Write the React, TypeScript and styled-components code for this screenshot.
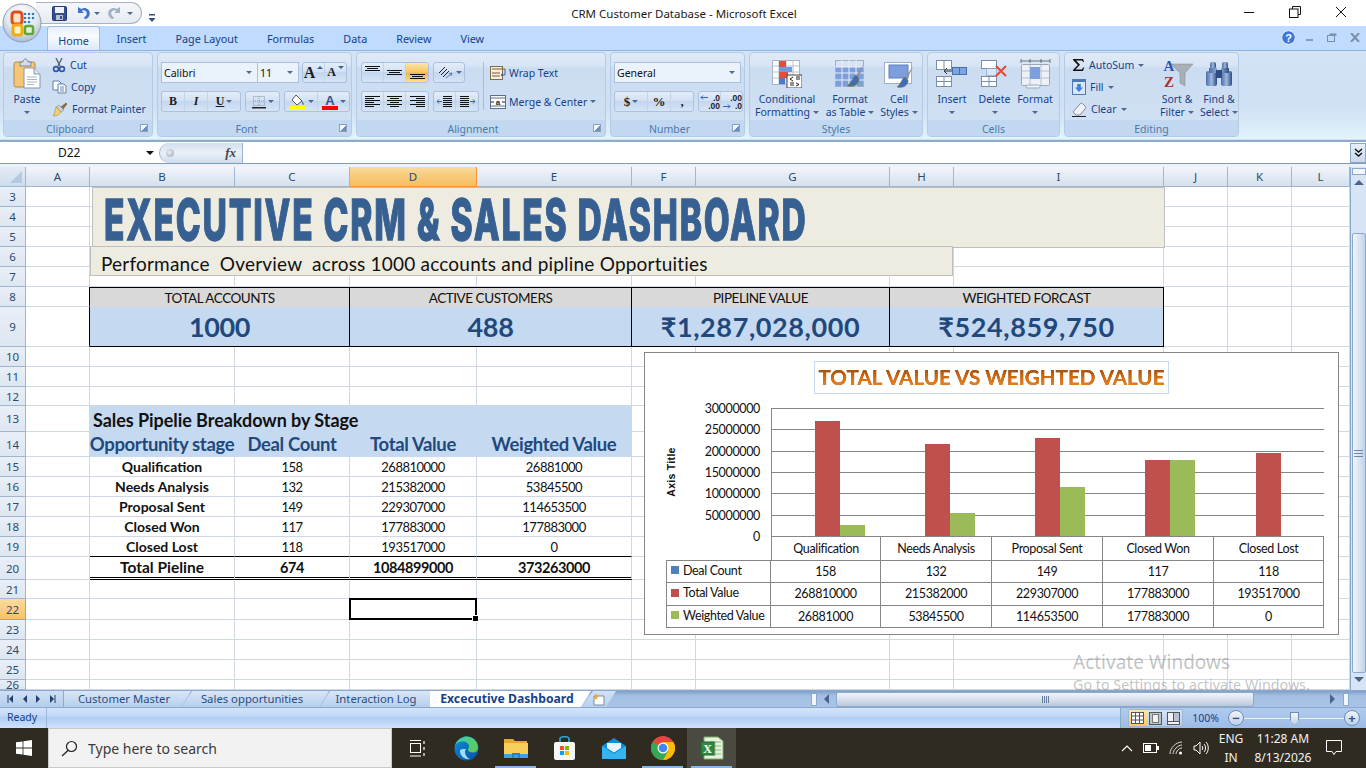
import React from 'react';
import styled, { createGlobalStyle } from 'styled-components';

const UI_FONT = '"Noto Sans", "Open Sans", sans-serif';
const SHEET_FONT = 'Lato, "Noto Sans", sans-serif';
const GRID_LINE = '#d0d7e5';

const GlobalStyle = createGlobalStyle`
  html, body { margin: 0; padding: 0; background: #fff; }
  * { box-sizing: border-box; }
`;

const Page = styled.div`
  position: relative;
  width: 1366px;
  height: 768px;
  overflow: hidden;
  display: flex;
  flex-direction: column;
  font-family: ${UI_FONT};
`;

/* ---------- title bar ---------- */

const TitleBar = styled.div`
  height: 26px;
  flex: none;
  background: #fff;
  display: flex;
  align-items: center;
  justify-content: center;
  padding-left: 2px;
  font-size: 11.5px;
  color: #1a1a1a;
`;

const WindowControls = styled.div`
  position: absolute;
  top: 6px;
  right: 19px;
  display: flex;
  gap: 34px;
  align-items: center;
`;

const Orb = styled.div`
  position: absolute;
  left: 2px;
  top: 3px;
  width: 40px;
  height: 40px;
  z-index: 3;
`;

const QuickAccess = styled.div`
  position: absolute;
  left: 36px;
  top: 2px;
  width: 106px;
  height: 22px;
  border: 1px solid #a7b2c2;
  border-left: none;
  border-radius: 0 12px 12px 0;
  background: linear-gradient(#f5f7fa, #e6ebf2);
  display: flex;
  align-items: center;
  gap: 8px;
  padding-left: 16px;
  z-index: 2;
`;

const QatPair = styled.div`
  display: flex;
  align-items: center;
  gap: 4px;
`;

const QatMenu = styled.div`
  position: absolute;
  left: 148px;
  top: 7px;
`;

/* ---------- ribbon tabs ---------- */

const TabRow = styled.div`
  height: 24px;
  flex: none;
  background: #bfdbff;
  display: flex;
  align-items: flex-end;
  padding-left: 47px;
  position: relative;
`;

const RibbonTab = styled.div<{ $active?: boolean }>`
  height: 24px;
  padding: 2px 14.5px 0;
  font-size: 10.8px;
  line-height: 21px;
  color: #15428b;
  ${(p) => p.$active && `
    width: 53px;
    padding: 3px 0 0;
    margin-right: 2px;
    text-align: center;
    background: linear-gradient(#e6f0fb, #f8fbff 40%, #dce9f8);
    border: 1px solid #9ebfdb;
    border-bottom: none;
    border-radius: 3px 3px 0 0;
  `}
`;

const HelpControls = styled.div`
  position: absolute;
  right: 6px;
  top: 4px;
  display: flex;
  align-items: center;
  gap: 13px;
`;

const HelpButton = styled.div`
  display: flex;
  margin-right: -4px;
`;

/* ---------- ribbon ---------- */

const Ribbon = styled.div`
  height: 92px;
  flex: none;
  padding: 1px 3px 0;
  display: flex;
  gap: 4px;
  background: linear-gradient(#d4e3f6 0, #cfe0f4 60%, #dcecf9 85%, #e4f4fc 97%, #8fabcc 98%, #8fabcc 100%);
  border-top: 1px solid #8db2e3;
`;

const GroupBox = styled.div<{ $width: number }>`
  width: ${(p) => p.$width}px;
  height: 85px;
  flex: none;
  display: flex;
  flex-direction: column;
  border: 1px solid #b4cbe6;
  border-radius: 4px;
  overflow: hidden;
  background: linear-gradient(#dfe9f7 0, #d8e5f6 15%, #cbdcf1 18%, #d2e1f4 100%);
`;

const GroupBody = styled.div`
  flex: 1;
  display: flex;
  align-items: flex-start;
  padding-top: 1px;
  min-height: 0;
`;

const GroupLabel = styled.div<{ $launcher?: boolean }>`
  height: 16px;
  flex: none;
  position: relative;
  padding-right: ${(p) => (p.$launcher ? 16 : 0)}px;
  background: #c2d8f0;
  color: #4e78ab;
  font-size: 10.5px;
  line-height: 18px;
  text-align: center;
`;

const Launcher = styled.span`
  position: absolute;
  right: 4px;
  top: 4px;
  width: 8px;
  height: 8px;
  border: 1px solid #86a0c4;
  background: linear-gradient(135deg, #f3f7fc 55%, #6f8db5 55%);
`;

const Caret = styled.span<{ $dark?: boolean }>`
  display: inline-block;
  width: 0;
  height: 0;
  flex: none;
  border-left: ${(p) => (p.$dark ? 4 : 3)}px solid transparent;
  border-right: ${(p) => (p.$dark ? 4 : 3)}px solid transparent;
  border-top: ${(p) => (p.$dark ? '4px solid #111' : '3px solid #4a6a94')};
`;

const TinyArrow = styled.span<{ $up?: boolean }>`
  display: inline-block;
  width: 0;
  height: 0;
  flex: none;
  align-self: flex-start;
  margin-top: 3px;
  border-left: 3px solid transparent;
  border-right: 3px solid transparent;
  ${(p) => (p.$up ? 'border-bottom: 3px solid #3f5f8f;' : 'border-top: 3px solid #3f5f8f;')}
`;

const LargeButton = styled.div<{ $width: number }>`
  width: ${(p) => p.$width}px;
  flex: none;
  display: flex;
  flex-direction: column;
  align-items: center;
  font-size: 10.5px;
  line-height: 13px;
  color: #15428b;
  white-space: nowrap;
  text-align: center;
`;

const LargeIcon = styled.div`
  height: 35px;
  margin-top: 2px;
  display: flex;
  align-items: center;
  justify-content: center;
`;

const LargeLabel = styled.div`
  margin-top: 2px;
  display: flex;
  flex-direction: column;
  align-items: center;
`;

const LabelLine = styled.span`
  display: flex;
  align-items: center;
  gap: 3px;
  height: 13px;
`;

const SmallStack = styled.div<{ $left: number; $width: number }>`
  width: ${(p) => p.$width}px;
  margin-left: ${(p) => p.$left}px;
  flex: none;
  display: flex;
  flex-direction: column;
`;

const SmallButton = styled.div`
  height: 22px;
  display: flex;
  align-items: center;
  gap: 4px;
  font-size: 10.5px;
  color: #15428b;
  white-space: nowrap;
`;

const WrapRow = styled(SmallButton)`
  height: 21px;
  margin-top: 8px;
  gap: 3px;
`;

const MergeRow = styled(SmallButton)`
  height: 21px;
  margin-top: 8px;
  gap: 3px;
`;

const ControlRows = styled.div<{ $left: number }>`
  margin: 8px 0 0 ${(p) => p.$left}px;
  flex: none;
  display: flex;
  flex-direction: column;
  gap: 8px;
`;

const ControlRow = styled.div`
  height: 21px;
  display: flex;
  gap: 4px;
`;

const FontCombos = styled.div`
  display: flex;
  margin-right: -1px;
  & > * + * { margin-left: -1px; }
`;

const ComboBox = styled.div<{ $width: number }>`
  width: ${(p) => p.$width}px;
  height: 21px;
  border: 1px solid #abc1de;
  background: #eaf2fb;
  display: flex;
  align-items: center;
  justify-content: space-between;
  padding: 0 5px 0 2px;
  font-size: 10.5px;
  color: #111;
`;

const ButtonSet = styled.div`
  height: 21px;
  display: flex;
  border: 1px solid #abc1de;
  border-radius: 3px;
  background: linear-gradient(#e4edf9, #d3e1f3 45%, #c4d7ef 50%, #d6e4f5);
  overflow: hidden;
`;

const SetItem = styled.div<{ $width: number; $on?: boolean; $size?: number }>`
  width: ${(p) => p.$width}px;
  height: 100%;
  display: flex;
  align-items: center;
  justify-content: center;
  gap: 2px;
  border-right: 1px solid #c3d4e9;
  color: #1c1c1c;
  font-family: "Liberation Serif", serif;
  font-size: ${(p) => p.$size ?? 12}px;
  font-weight: 700;
  &:last-child { border-right: none; }
  ${(p) => p.$on && 'background: linear-gradient(#fde6a8, #fbc868 45%, #f9b24a 55%, #fde08f);'}
`;

const Separator = styled.div`
  width: 1px;
  height: 48px;
  margin: 8px 0 0 4px;
  background: #a6bcd8;
  flex: none;
`;

/* ---------- formula bar ---------- */

const FormulaBar = styled.div`
  height: 25px;
  flex: none;
  background: #fff;
  display: flex;
  align-items: flex-start;
  border-bottom: 3px solid #eef1f5;
`;

const FormulaInner = styled.div`
  width: 100%;
  height: 21px;
  margin-top: 1px;
  display: flex;
  border-bottom: 1px solid #7f9db9;
`;

const NameBox = styled.div`
  width: 159px;
  flex: none;
  font-size: 12px;
  line-height: 20px;
  color: #111;
  padding: 0 5px 0 58px;
  display: flex;
  align-items: center;
  justify-content: space-between;
`;

const FxPill = styled.div`
  width: 84px;
  flex: none;
  border-radius: 12px 0 0 12px;
  border: 1px solid #9db2cc;
  border-top: none;
  border-bottom: none;
  background: linear-gradient(#d3dfee, #e9f0f8 50%, #cfdcec);
  display: flex;
  align-items: center;
  justify-content: space-between;
  padding: 0 6px;
`;

const FxDot = styled.span`
  width: 8px;
  height: 8px;
  border-radius: 50%;
  background: radial-gradient(circle at 40% 40%, #eef1f5, #9aa5b3);
`;

const FxText = styled.span`
  font-family: "Liberation Serif", serif;
  font-style: italic;
  font-weight: 700;
  font-size: 13px;
  color: #444;
`;

const FormulaInput = styled.div`
  flex: 1;
`;

const ExpandButton = styled.div`
  width: 16px;
  flex: none;
  background: linear-gradient(#e8eff8, #c9d9ec);
  border: 1px solid #8ca6c6;
  display: flex;
  align-items: center;
  justify-content: center;
`;

/* ---------- sheet ---------- */

const SheetArea = styled.div`
  height: 523px;
  flex: none;
  display: flex;
  position: relative;
`;

const SheetGrid = styled.div`
  position: relative;
  width: 1350px;
  height: 523px;
  overflow: hidden;
  display: grid;
  grid-template-columns: 26px 64px 145px 115px 127px 155px 64px 194px 64px 210px 64px 64px 58px;
  grid-template-rows: 20px 20px 20px 20px 20px 20px 20px 40px 20px 20px 19px 26px 25px 20px 20px 20px 20px 20px 23px 19px 21px 20px 20px 20px 10px;
  font-family: ${SHEET_FONT};
`;

const CornerCell = styled.div`
  background: linear-gradient(#e3ebf6, #cfdcec);
  border-right: 1px solid #9eb6ce;
  border-bottom: 1px solid #9eb6ce;
  position: relative;
  &::after {
    content: '';
    position: absolute;
    right: 3px;
    bottom: 3px;
    border-left: 12px solid transparent;
    border-bottom: 12px solid #b4c9e2;
  }
`;

const ColumnHead = styled.div<{ $on?: boolean }>`
  display: flex;
  align-items: center;
  justify-content: center;
  font-family: ${UI_FONT};
  font-size: 11.5px;
  color: #2c4a6e;
  border-right: 1px solid ${(p) => (p.$on ? '#f29536' : '#9eb6ce')};
  border-bottom: 1px solid ${(p) => (p.$on ? '#f29536' : '#9eb6ce')};
  background: ${(p) => (p.$on
    ? 'linear-gradient(#f9dc9f, #f8cb7c 45%, #f6bd63)'
    : 'linear-gradient(#f3f6fb, #e4ebf5 45%, #d6e1ee)')};
`;

const RowHead = styled.div<{ $on?: boolean }>`
  display: flex;
  align-items: center;
  justify-content: center;
  font-family: ${UI_FONT};
  font-size: 11.5px;
  color: #2c4a6e;
  border-right: 1px solid ${(p) => (p.$on ? '#f29536' : '#9eb6ce')};
  border-bottom: 1px solid ${(p) => (p.$on ? '#f29536' : '#9eb6ce')};
  background: ${(p) => (p.$on ? 'linear-gradient(#f9dc9f, #f6c167)' : 'linear-gradient(#e9eff7, #dde6f1)')};
`;

const Cell = styled.div<{ $edge?: string; $under?: string }>`
  min-width: 0;
  border-right: 1px solid ${(p) => p.$edge ?? GRID_LINE};
  border-bottom: 1px solid ${(p) => p.$under ?? GRID_LINE};
  display: flex;
  align-items: center;
  justify-content: center;
  white-space: nowrap;
  font-size: 13px;
  letter-spacing: -0.5px;
  color: #111;
`;

const KpiLabel = styled(Cell)`
  grid-column: span 2;
  background: #d9d9d9;
  border-top: 1px solid #000;
  border-right: 1px solid #000;
  border-bottom: none;
  font-size: 13.5px;
  letter-spacing: -0.45px;
`;

const KpiValue = styled(Cell)<{ $wide?: boolean }>`
  grid-column: span 2;
  background: #c5d9f1;
  border-right: 1px solid #000;
  border-bottom: 1px solid #000;
  font-size: 27px;
  font-weight: 700;
  letter-spacing: ${(p) => (p.$wide ? '0.6px' : '-0.4px')};
  color: #1f497d;
  padding-bottom: 1px;
`;

const BandTitle = styled(Cell)`
  grid-column: span 4;
  justify-content: flex-start;
  padding: 2px 0 0 3px;
  background: #c5d9f1;
  border-color: #c5d9f1;
  font-size: 18px;
  font-weight: 700;
  letter-spacing: -0.05px;
`;

const BandHead = styled(Cell)`
  background: #c5d9f1;
  border-color: #c5d9f1;
  font-size: 18.5px;
  font-weight: 700;
  letter-spacing: -0.35px;
  color: #1f497d;
`;

const StageCell = styled(Cell)`
  font-weight: 700;
  font-size: 14px;
  letter-spacing: 0;
`;

const TotalCell = styled(Cell)`
  font-weight: 700;
  font-size: 14.5px;
  letter-spacing: -0.4px;
  border-bottom: 3px double #000;
`;

const TotalName = styled(TotalCell)`
  font-size: 15.5px;
  letter-spacing: 0;
`;

const ActiveCell = styled(Cell)`
  position: relative;
  &::before {
    content: '';
    position: absolute;
    inset: -1px;
    border: 2px solid #000;
  }
  &::after {
    content: '';
    position: absolute;
    right: -3px;
    bottom: -3px;
    width: 5px;
    height: 5px;
    background: #000;
    border: 1px solid #fff;
  }
`;

const TitleBanner = styled.div`
  position: absolute;
  left: 92px;
  top: 20px;
  width: 1073px;
  height: 61px;
  background: #eeece1;
  border: 1px solid #bfbfbf;
  padding: 4px 0 0 11px;
  display: flex;
  align-items: center;
`;

const BannerText = styled.span`
  font-family: Inter, "Liberation Sans", sans-serif;
  font-weight: 800;
  font-size: 57px;
  line-height: 57px;
  letter-spacing: 3px;
  color: #376092;
  -webkit-text-stroke: 1.3px #376092;
  white-space: nowrap;
  transform-origin: left center;
  transform: scaleX(0.589);
`;

const SubBanner = styled.div`
  position: absolute;
  left: 90px;
  top: 79px;
  width: 863px;
  height: 30px;
  background: #eeece1;
  border: 1px solid #bfbfbf;
  padding-left: 10px;
  font-family: ${SHEET_FONT};
  font-size: 19px;
  letter-spacing: 0.2px;
  line-height: 34px;
  color: #111;
  white-space: pre;
`;

/* ---------- chart ---------- */

const ChartFrame = styled.div`
  position: absolute;
  left: 644px;
  top: 185px;
  width: 695px;
  height: 283px;
  background: #fff;
  border: 1px solid #868686;
  display: flex;
  flex-direction: column;
`;

const ChartTitle = styled.div`
  width: 355px;
  height: 33px;
  margin: 8px 0 0 169px;
  border: 1px solid #c5d9f1;
  display: flex;
  justify-content: center;
`;

const ChartTitleText = styled.span`
  font-family: ${SHEET_FONT};
  font-weight: 700;
  font-size: 20.6px;
  line-height: 31px;
  white-space: nowrap;
  background: linear-gradient(#a94f08 25%, #e0700c 55%, #ea8420 80%);
  -webkit-background-clip: text;
  background-clip: text;
  color: transparent;
  filter: drop-shadow(0.6px 0.6px 0.4px rgba(100, 55, 12, 0.9));
`;

const ChartPlot = styled.svg`
  display: block;
  margin-top: 6px;
  flex: none;
  overflow: visible;
`;

const DataTable = styled.div`
  margin-left: 21px;
  width: 658px;
  display: grid;
  grid-template-columns: 105px 110px 111px 111px 111px 110px;
  grid-template-rows: 24px 22px 23px 22px;
  font-family: ${SHEET_FONT};
  font-size: 12.5px;
  letter-spacing: -0.35px;
  color: #111;
`;

const TableBlank = styled.div`
  border-bottom: 1px solid #868686;
`;

const TableCell = styled.div`
  display: flex;
  align-items: center;
  justify-content: center;
  padding-bottom: 1px;
  white-space: nowrap;
  border-right: 1px solid #868686;
  border-bottom: 1px solid #868686;
`;

const FirstDataCell = styled(TableCell)`
  border-left: 1px solid #868686;
`;

const LegendCell = styled(TableCell)`
  justify-content: flex-start;
  padding: 0 0 3px 4px;
  gap: 4px;
  border-left: 1px solid #868686;
`;

const LegendKey = styled.span<{ $color: string }>`
  width: 8px;
  height: 8px;
  flex: none;
  background: ${(p) => p.$color};
`;

const Watermark = styled.div`
  position: absolute;
  left: 1073px;
  top: 483px;
  font-family: "Noto Sans", sans-serif;
  color: rgba(110, 110, 110, 0.42);
  pointer-events: none;
  white-space: nowrap;
`;

const WatermarkTitle = styled.div`
  font-size: 19px;
  line-height: 24px;
`;

const WatermarkHint = styled.div`
  font-size: 14.3px;
  line-height: 20px;
  margin-top: 1px;
`;

/* ---------- scrollbars ---------- */

const VScroll = styled.div`
  width: 16px;
  height: 523px;
  flex: none;
  background: #d6e4f5;
  border-left: 1px solid #8ba9cc;
  display: flex;
  flex-direction: column;
  align-items: center;
`;

const ScrollSplit = styled.div`
  width: 14px;
  height: 7px;
  margin-top: 1px;
  background: #f3f7fc;
  border: 1px solid #8ba9cc;
  flex: none;
`;

const ScrollArrowBox = styled.div`
  height: 14px;
  display: flex;
  align-items: center;
  justify-content: center;
  flex: none;
`;

const VThumb = styled.div`
  width: 14px;
  height: 440px;
  margin-top: 44px;
  flex: none;
  border: 1px solid #8ba9cc;
  border-radius: 2px;
  background: linear-gradient(90deg, #f2f6fb, #dae5f2 50%, #c1d2e7);
  display: flex;
  align-items: center;
  justify-content: center;
`;

const VGrip = styled.div`
  width: 9px;
  height: 7px;
  border-top: 1px solid #6d88aa;
  border-bottom: 1px solid #6d88aa;
  position: relative;
  &::after {
    content: '';
    position: absolute;
    left: 0;
    right: 0;
    top: 2px;
    height: 1px;
    background: #6d88aa;
  }
`;

const DownArrow = styled.div`
  margin-top: 3px;
  width: 14px;
  display: flex;
  justify-content: center;
`;

/* ---------- sheet tabs ---------- */

const SheetTabs = styled.div`
  height: 17px;
  flex: none;
  display: flex;
  align-items: stretch;
  background: linear-gradient(#7f9fc9, #a3bfe3 30%, #a9c4e6);
  border-top: 1px solid #8ba9cc;
`;

const TabNav = styled.div`
  width: 64px;
  flex: none;
  display: flex;
  align-items: center;
  justify-content: space-around;
  padding: 0 3px;
  background: linear-gradient(#cfe0f5, #b4cdec);
  border-right: 1px solid #8ba9cc;
`;

const SheetTab = styled.div<{ $width: number; $active?: boolean; $first?: boolean }>`
  width: ${(p) => p.$width}px;
  flex: none;
  display: flex;
  align-items: center;
  justify-content: center;
  font-size: 11.3px;
  color: #2a4d7f;
  white-space: nowrap;
  background: linear-gradient(#d8e6f7, #b6cfed);
  clip-path: polygon(${(p) => (p.$first || p.$active ? '0' : '10px')} 0, calc(100% - 1px) 0, calc(100% - 11px) 100%, 0 100%);
  margin-right: -10px;
  padding: 0 8px 2px 0;
  ${(p) => p.$active && `
    background: #fff;
    font-weight: 700;
    color: #15428b;
    font-size: 12.2px;
  `}
`;

const NewSheetTab = styled.div`
  width: 34px;
  flex: none;
  display: flex;
  align-items: center;
  justify-content: center;
  background: linear-gradient(#d2e2f6, #b8d0ed);
  clip-path: polygon(11px 0, 100% 0, calc(100% - 10px) 100%, 0 100%);
`;

const HScrollRow = styled.div`
  margin-left: 195px;
  width: 538px;
  display: flex;
  align-items: center;
  flex: none;
`;

const HSplit = styled.div`
  width: 6px;
  height: 13px;
  background: #f3f7fc;
  border: 1px solid #8ba9cc;
  flex: none;
`;

const HArrowBox = styled.div`
  width: 19px;
  flex: none;
  display: flex;
  justify-content: center;
`;

const HTrackEnd = styled.div`
  flex: 1;
  display: flex;
  justify-content: flex-end;
  padding-right: 7px;
`;

const HThumb = styled.div`
  width: 418px;
  height: 15px;
  flex: none;
  border: 1px solid #8ba9cc;
  border-radius: 2px;
  background: linear-gradient(#f0f4f9, #dbe3ee 45%, #b9c8da);
  display: flex;
  align-items: center;
  justify-content: center;
`;

const HGrip = styled.div`
  width: 7px;
  height: 7px;
  background: repeating-linear-gradient(90deg, #667f9f 0 1px, transparent 1px 2px);
`;

/* ---------- status bar ---------- */

const StatusBar = styled.div`
  height: 21px;
  flex: none;
  display: flex;
  background: linear-gradient(#d3e4fa, #c4daf7 35%, #b1cdf2 50%, #cfe2fb);
  border-top: 1px solid #8ba9cc;
`;

const ReadyCell = styled.div`
  width: 47px;
  flex: none;
  padding-left: 7px;
  font-size: 10.5px;
  line-height: 18px;
  color: #15428b;
  border-right: 1px solid #9ab7da;
`;

const StatusGap = styled.div`
  flex: 1;
`;

const StatusRight = styled.div`
  width: 246px;
  flex: none;
  display: flex;
  align-items: center;
  padding: 0 6px 0 7px;
  background: linear-gradient(#b1cbee, #9dbce6);
  border-left: 1px solid #8ba9cc;
`;

const ViewButtons = styled.div`
  width: 55px;
  height: 18px;
  flex: none;
  display: flex;
  border: 1px solid #9db6d4;
  border-radius: 2px;
  background: linear-gradient(#d6e4f5, #b8cee9);
`;

const ViewButton = styled.div<{ $on?: boolean }>`
  flex: 1;
  display: flex;
  align-items: center;
  justify-content: center;
  ${(p) => p.$on && 'background: linear-gradient(#fde6a8, #fbc868);'}
`;

const ZoomText = styled.span`
  width: 45px;
  flex: none;
  text-align: center;
  font-size: 10.5px;
  color: #15428b;
`;

const ZoomCircle = styled.div`
  width: 16px;
  height: 16px;
  flex: none;
  border-radius: 50%;
  border: 1px solid #6f8db5;
  background: linear-gradient(#f2f6fc, #bcd0ea);
  display: flex;
  align-items: center;
  justify-content: center;
  font-size: 13px;
  font-weight: 700;
  line-height: 12px;
  color: #33527d;
`;

const ZoomTrack = styled.div`
  flex: 1;
  height: 1px;
  background: #e9f1fb;
  position: relative;
`;

const ZoomKnob = styled.div`
  position: absolute;
  left: 46px;
  top: -6px;
  width: 9px;
  height: 13px;
  background: linear-gradient(#f4f7fb, #c2d2e6);
  border: 1px solid #6f8db5;
  clip-path: polygon(0 0, 100% 0, 100% 65%, 50% 100%, 0 65%);
`;

/* ---------- taskbar ---------- */

const Taskbar = styled.div`
  height: 40px;
  flex: none;
  display: flex;
  align-items: stretch;
  background: #2f2b21;
  color: #fff;
`;

const StartButton = styled.div`
  width: 48px;
  flex: none;
  display: flex;
  align-items: center;
  justify-content: center;
`;

const SearchBox = styled.div`
  width: 344px;
  flex: none;
  background: #f2f2f2;
  border: 1px solid #c8c8c8;
  display: flex;
  align-items: center;
  gap: 10px;
  padding-left: 12px;
  font-size: 14px;
  color: #3a3a3a;
`;

const TaskIcons = styled.div`
  display: flex;
  flex: none;
  margin-left: 1px;
`;

const TaskIcon = styled.div<{ $running?: boolean; $active?: boolean }>`
  width: 49px;
  display: flex;
  align-items: center;
  justify-content: center;
  position: relative;
  ${(p) => p.$active && 'background: #4b4a40;'}
  ${(p) => p.$running && `
    &::after {
      content: '';
      position: absolute;
      left: 4px;
      right: 4px;
      bottom: 0;
      height: 2px;
      background: #7fb8ec;
    }
  `}
`;

const Tray = styled.div`
  margin-left: auto;
  padding-right: 16px;
  display: flex;
  align-items: center;
  flex: none;
`;

const TrayIcons = styled.div`
  display: flex;
  align-items: center;
  gap: 10px;
  margin-right: 4px;
`;

const TrayText = styled.div<{ $width: number }>`
  width: ${(p) => p.$width}px;
  margin-right: 4px;
  text-align: center;
  font-size: 12px;
  line-height: 19px;
  color: #f2f2f2;
`;

const Notify = styled.div`
  width: 33px;
  display: flex;
  justify-content: center;
`;

const SortSvg = styled.svg`
  overflow: visible;
`;

/* ---------- icons ---------- */

const OrbIcon = () => (
  <svg width="40" height="40" viewBox="0 0 40 40">
    <defs>
      <radialGradient id="orbFill" cx="50%" cy="30%" r="75%">
        <stop offset="0" stopColor="#ffffff" />
        <stop offset="0.55" stopColor="#e2e8ef" />
        <stop offset="1" stopColor="#9db3cc" />
      </radialGradient>
    </defs>
    <circle cx="20" cy="20" r="19" fill="url(#orbFill)" stroke="#8d9cb0" />
    <rect x="10" y="9" width="10" height="12" rx="3" fill="#fbe3c8" stroke="#df4f1c" strokeWidth="3" />
    <rect x="11" y="22" width="9" height="10" rx="2.5" fill="#fdf2c9" stroke="#f1ac14" strokeWidth="3" />
    <rect x="23" y="23" width="8" height="8" rx="2" fill="#e3f2d6" stroke="#5ea838" strokeWidth="2.5" />
    <g fill="#2a7fc9">
      <circle cx="23" cy="11" r="1.3" /><circle cx="27" cy="11" r="1.3" /><circle cx="31" cy="11" r="1.3" />
      <circle cx="23" cy="15" r="1.3" /><circle cx="27" cy="15" r="1.3" /><circle cx="31" cy="15" r="1.3" />
      <circle cx="23" cy="19" r="1.3" /><circle cx="27" cy="19" r="1.3" />
    </g>
  </svg>
);

const SaveIcon = () => (
  <svg width="15" height="15" viewBox="0 0 15 15">
    <rect x="0.5" y="0.5" width="14" height="14" rx="1" fill="#35508f" stroke="#233a75" />
    <rect x="3" y="1" width="9" height="6" fill="#eef2f9" />
    <rect x="4" y="9" width="7" height="5" fill="#b9c2d2" />
    <rect x="8" y="10" width="2" height="3" fill="#35508f" />
  </svg>
);

const UndoIcon = ({ color }: { color: string }) => (
  <svg width="15" height="14" viewBox="0 0 15 14">
    <path d="M3 1v6h6L6.6 4.8c2.6-1.4 5.2.2 5.2 2.7 0 1.8-1.2 3.2-3 3.7l1.4 2c3-.8 4.6-3.2 4.6-5.7 0-4.2-5-7-8.4-4.4z" fill={color} />
  </svg>
);

const RedoIcon = ({ color }: { color: string }) => (
  <svg width="15" height="14" viewBox="0 0 15 14">
    <path d="M12 1v6H6l2.4-2.2C5.8 3.4 3.2 5 3.2 7.5c0 1.8 1.2 3.2 3 3.7l-1.4 2C1.8 12.4.2 10 .2 7.5.2 3.3 5.2.5 8.6 3.1z" fill={color} />
  </svg>
);

const QatDropIcon = () => (
  <svg width="8" height="10" viewBox="0 0 8 10">
    <rect x="1" y="0" width="6" height="1.5" fill="#2d4f80" />
    <path d="M0.5 4h7L4 8z" fill="#2d4f80" />
  </svg>
);

const LineBox = ({ lines, top }: { lines: [number, number][]; top: number }) => (
  <svg width="17" height="15" viewBox="0 0 17 15">
    {lines.map(([x, w], i) => (
      <rect key={i} x={x} y={top + i * 2} width={w} height="1" fill="#111" />
    ))}
  </svg>
);

const PasteIcon = () => (
  <svg width="28" height="32" viewBox="0 0 28 32">
    <rect x="1" y="4" width="21" height="25" rx="2" fill="#f5c677" stroke="#b98a3f" />
    <path d="M7 4h3c0-4 5-4 5 0h3v4H7z" fill="#d7dde6" stroke="#7f8894" />
    <path d="M11 10h10l6 6v14H11z" fill="#fff" stroke="#8a97a8" />
    <path d="M21 10v6h6" fill="#dfe6ef" stroke="#8a97a8" />
    <path d="M14 19h10M14 21.5h10M14 24h10M14 26.5h7" stroke="#aab5c4" />
  </svg>
);

const ScissorsIcon = () => (
  <svg width="14" height="15" viewBox="0 0 14 15">
    <path d="M4 0l4 8M10 0L6 8" stroke="#5a6472" strokeWidth="1.4" />
    <circle cx="4" cy="11" r="2.4" fill="none" stroke="#2f55a5" strokeWidth="1.6" />
    <circle cx="10" cy="11" r="2.4" fill="none" stroke="#2f55a5" strokeWidth="1.6" />
  </svg>
);

const CopyIcon = () => (
  <svg width="15" height="14" viewBox="0 0 15 14">
    <path d="M1 1h6l2 2v7H1z" fill="#fff" stroke="#5c7fb0" />
    <path d="M6 4h6l2 2v7H6z" fill="#fff" stroke="#5c7fb0" />
    <path d="M8 7h4M8 9h4M8 11h4" stroke="#6c87ad" />
  </svg>
);

const PainterIcon = () => (
  <svg width="16" height="15" viewBox="0 0 16 15">
    <path d="M9 5l2 2 4-5-1-1z" fill="#9a6a3c" stroke="#5d3f22" strokeWidth="0.5" />
    <path d="M7 3l5 5-3 2-5-5z" fill="#c7ced8" stroke="#747f8d" strokeWidth="0.5" />
    <path d="M4 5l5 5c-2 3-5 4-8 4 2-2 2-6 3-9z" fill="#f3d36b" stroke="#a88a30" strokeWidth="0.6" />
  </svg>
);

const BorderIcon = () => (
  <svg width="14" height="14" viewBox="0 0 14 14">
    <rect x="1.5" y="1.5" width="11" height="9" fill="none" stroke="#8a98aa" strokeDasharray="1 1" />
    <path d="M7 1v10M1 6h12" stroke="#8a98aa" strokeDasharray="1 1" />
    <rect x="0" y="12" width="14" height="1.5" fill="#222" />
  </svg>
);

const FillIcon = () => (
  <svg width="17" height="16" viewBox="0 0 17 16">
    <path d="M7 1l6 6-5 4-5-5z" fill="#fff" stroke="#555" />
    <path d="M13 7c2 2 2 3 1.5 4-.8 0-1.7-1-1.5-4z" fill="#4a6fa5" />
    <rect x="1" y="12" width="15" height="4" fill="#ffff00" />
  </svg>
);

const FontColorIcon = () => (
  <svg width="16" height="16" viewBox="0 0 16 16">
    <text x="8" y="11" textAnchor="middle" fontFamily="Liberation Sans" fontWeight="700" fontSize="13" fill="#2f4f8f">A</text>
    <rect x="0" y="12" width="16" height="4" fill="#ff0000" />
  </svg>
);

const OrientationIcon = () => (
  <svg width="17" height="15" viewBox="0 0 17 15">
    <path d="M2 8l6-6M4 10l6-6M6 12l6-6" stroke="#222" />
    <path d="M9 13l6-5m0 0l-3 .5m3-.5l-1 3" stroke="#5a7fb0" fill="none" />
  </svg>
);

const IndentIcon = ({ flip }: { flip?: boolean }) => (
  <svg width="15" height="14" viewBox="0 0 15 14">
    <g transform={flip ? 'matrix(-1 0 0 1 15 0)' : undefined}>
      <path d="M6 1.5h9M6 3.5h9M6 5.5h9M6 7.5h9M6 9.5h9M6 11.5h9" stroke="#111" />
      <path d="M5 6.5H0m0 0l2-2m-2 2l2 2" stroke="#2f67c0" fill="none" />
    </g>
  </svg>
);

const WrapIcon = () => (
  <svg width="16" height="14" viewBox="0 0 16 14">
    <rect x="0.5" y="0.5" width="12" height="13" fill="#f3efe2" stroke="#7b6d4c" />
    <path d="M2 3h13M2 7h8M2 10h8" stroke="#8a5b2a" />
    <path d="M15 3v6h-4m0 0l2-2m-2 2l2 2" stroke="#44638e" fill="none" />
  </svg>
);

const MergeIcon = () => (
  <svg width="16" height="14" viewBox="0 0 16 14">
    <rect x="0.5" y="0.5" width="15" height="13" fill="#fff" stroke="#5c6f88" />
    <path d="M0 3h16M0 11h16" stroke="#5c6f88" />
    <text x="8" y="10" textAnchor="middle" fontFamily="Liberation Sans" fontSize="8" fontWeight="700" fill="#222">a</text>
    <path d="M1 7h3M15 7h-3" stroke="#222" />
  </svg>
);

const DecIcon = ({ up }: { up: boolean }) => (
  <svg width="20" height="16" viewBox="0 0 20 16">
    <text x="20" y="7" textAnchor="end" fontFamily="Liberation Sans" fontWeight="700" fontSize="8.5" fill="#222">{up ? '.0' : '.00'}</text>
    <text x="20" y="15" textAnchor="end" fontFamily="Liberation Sans" fontWeight="700" fontSize="8.5" fill="#222">{up ? '.00' : '.0'}</text>
    <path d={up ? 'M8 3.5H1m0 0l2-2m-2 2l2 2' : 'M1 12.5h7m0 0l-2-2m2 2l-2 2'} stroke="#2f67c0" fill="none" />
  </svg>
);

const ConditionalIcon = () => (
  <svg width="30" height="28" viewBox="0 0 30 28">
    <rect x="0.5" y="0.5" width="27" height="24" fill="#fff" stroke="#a8b3c2" />
    <path d="M7 0v25M14 0v25M21 0v25M0 6h28M0 12h28M0 18h28" stroke="#b6c0cd" />
    <rect x="7" y="1" width="7" height="6" fill="#e84e37" />
    <rect x="7" y="7" width="13" height="5" fill="#6f9be0" />
    <rect x="7" y="12" width="9" height="6" fill="#e84e37" />
    <rect x="7" y="18" width="6" height="6" fill="#4a7bcf" />
    <rect x="15" y="15" width="15" height="13" fill="#fff" stroke="#444" />
    <path d="M21 17l-3 2 3 2M24 17h4M24 19h4M18 23h4M18 25h4M24 23l3 1.5-3 1.5" stroke="#222" fill="none" />
  </svg>
);

const TableBrushIcon = () => (
  <svg width="30" height="28" viewBox="0 0 30 28">
    <rect x="0.5" y="0.5" width="28" height="26" fill="#7e9fdd" stroke="#9fb0c6" />
    <rect x="1" y="1" width="27" height="6" fill="#d8e2f2" />
    <path d="M7 0v27M14 0v27M21 0v27M0 7h29M0 13h29M0 20h29" stroke="#e9eff8" />
    <path d="M29 4l-8 12 2 2z" fill="#8b9099" />
    <path d="M21 15c-3 1-3 6-9 11 7 2 13-2 12-8z" fill="#3e6db8" stroke="#9d8544" strokeWidth="0.6" />
  </svg>
);

const CellStyleIcon = () => (
  <svg width="30" height="28" viewBox="0 0 30 28">
    <rect x="0.5" y="2.5" width="27" height="21" fill="#fff" stroke="#9fb0c6" />
    <rect x="5" y="5" width="19" height="13" fill="#7e9fdd" stroke="#5d7fbd" />
    <path d="M29 6l-8 12 2 2z" fill="#8b9099" />
    <path d="M21 17c-3 1-3 5-8 10 6 2 12-2 11-7z" fill="#3e6db8" stroke="#9d8544" strokeWidth="0.6" />
  </svg>
);

const InsertCellsIcon = () => (
  <svg width="32" height="28" viewBox="0 0 32 28">
    <rect x="0.5" y="0.5" width="15" height="9" fill="#fff" stroke="#7b8ea8" />
    <path d="M8 0v10" stroke="#7b8ea8" />
    <rect x="0.5" y="16.5" width="15" height="10" fill="#fff" stroke="#7b8ea8" />
    <path d="M8 16v11M0 21.5h16" stroke="#7b8ea8" />
    <rect x="16.5" y="7.5" width="14" height="7" fill="#7ea3df" stroke="#4a6fa8" />
    <path d="M23.5 8v6" stroke="#4a6fa8" />
    <path d="M16 11H8m0 0l3-3m-3 3l3 3" stroke="#333" fill="none" />
  </svg>
);

const DeleteCellsIcon = () => (
  <svg width="28" height="28" viewBox="0 0 28 28">
    <rect x="0.5" y="0.5" width="15" height="8" fill="#fff" stroke="#7b8ea8" />
    <rect x="0.5" y="16.5" width="15" height="10" fill="#fff" stroke="#7b8ea8" />
    <path d="M8 16v11M0 21.5h16" stroke="#7b8ea8" />
    <rect x="5.5" y="8.5" width="10" height="7" fill="#dbe5f5" stroke="#6d8cc0" strokeDasharray="1 1" />
    <path d="M15 6l10 10M25 6L15 16" stroke="#e8472c" strokeWidth="2" />
  </svg>
);

const FormatCellsIcon = () => (
  <svg width="31" height="30" viewBox="0 0 31 30">
    <path d="M1 2h29M1 0v4M30 0v4M10 0v4M21 0v4" stroke="#444" strokeWidth="0.7" />
    <rect x="1.5" y="5.5" width="28" height="21" rx="1" fill="#eef2f8" stroke="#9ba8ba" />
    <path d="M10 6v20M21 6v20M2 12h27M2 19h27" stroke="#b5c0cf" />
    <rect x="10" y="8" width="10" height="12" fill="#7e9fdd" />
    <rect x="6" y="26" width="14" height="3" rx="1.5" fill="#eef2f8" stroke="#9ba8ba" />
  </svg>
);

const SigmaIcon = () => (
  <svg width="13" height="12" viewBox="0 0 13 12">
    <path d="M1 0h10l1 3h-1l-1-1.6H4l4 4.4-4.6 4.6H10l1.2-1.9h1L11 12H1v-1l4.8-5L1 1z" fill="#111" />
  </svg>
);

const FillDownIcon = () => (
  <svg width="14" height="16" viewBox="0 0 14 16">
    <rect x="0.5" y="0.5" width="13" height="15" fill="#d9e6f7" stroke="#4f79b6" />
    <rect x="1" y="1" width="12" height="2" fill="#4f79b6" />
    <path d="M7 13L3 8.5h2.2V5h3.6v3.5H11z" fill="#3f7fd8" />
  </svg>
);

const EraserIcon = () => (
  <svg width="15" height="15" viewBox="0 0 15 15">
    <path d="M1 10l7-8c1-1 2-1 3 0l2 2c1 1 1 2 0 3l-5 6H4z" fill="#eef1f5" stroke="#7e8a99" />
    <path d="M0 14.5h14" stroke="#222" />
  </svg>
);

const SortIcon = () => (
  <SortSvg width="32" height="30" viewBox="0 0 32 30">
    <path d="M10 5h22l-8 9v13l-5-3V14z" fill="#a9afb8" stroke="#80868f" strokeWidth="0.5" />
    <text x="8" y="12" textAnchor="middle" fontFamily="Liberation Serif" fontWeight="700" fontSize="15" fill="#2b55b0">A</text>
    <text x="8" y="28" textAnchor="middle" fontFamily="Liberation Serif" fontWeight="700" fontSize="15" fill="#a3342a">Z</text>
  </SortSvg>
);

const BinocularsIcon = () => (
  <svg width="28" height="26" viewBox="0 0 28 26">
    <defs>
      <linearGradient id="binoFill" x1="0" x2="1" y1="0" y2="0">
        <stop offset="0" stopColor="#4a6da8" />
        <stop offset="0.5" stopColor="#9db7dd" />
        <stop offset="1" stopColor="#2d4c85" />
      </linearGradient>
    </defs>
    <rect x="5" y="1" width="6" height="7" rx="2" fill="url(#binoFill)" />
    <rect x="17" y="1" width="6" height="7" rx="2" fill="url(#binoFill)" />
    <rect x="1" y="10" width="11" height="15" rx="2" fill="url(#binoFill)" />
    <rect x="16" y="10" width="11" height="15" rx="2" fill="url(#binoFill)" />
    <path d="M4 7h8v5H4zM16 7h8v5h-8z" fill="url(#binoFill)" />
    <rect x="11" y="9" width="6" height="8" fill="#2d4c85" />
  </svg>
);

const HelpIcon = () => (
  <svg width="15" height="15" viewBox="0 0 15 15">
    <circle cx="7.5" cy="7.5" r="6.8" fill="#3e77d6" stroke="#e9f2fb" />
    <text x="7.5" y="11.5" textAnchor="middle" fontFamily="Liberation Sans" fontWeight="700" fontSize="11" fill="#fff">?</text>
  </svg>
);

const SmallWindowIcons = () => (
  <>
    <svg width="9" height="9" viewBox="0 0 9 9"><rect x="1" y="6" width="7" height="2" fill="#8a9cb3" /></svg>
    <svg width="10" height="9" viewBox="0 0 10 9">
      <rect x="0.5" y="2.5" width="7" height="6" fill="none" stroke="#7b8ea8" />
      <rect x="2.5" y="0.5" width="7" height="2" fill="#7b8ea8" />
    </svg>
    <svg width="10" height="9" viewBox="0 0 10 9"><path d="M1 0l8 9M9 0L1 9" stroke="#7b8ea8" strokeWidth="2" /></svg>
  </>
);

const MinimizeIcon = () => (
  <svg width="12" height="12" viewBox="0 0 12 12"><path d="M1 6.5h10" stroke="#111" /></svg>
);

const RestoreIcon = () => (
  <svg width="12" height="12" viewBox="0 0 12 12">
    <path d="M3.5 3V.5h8v8H9" fill="none" stroke="#111" />
    <rect x="0.5" y="3" width="8.5" height="8.5" fill="none" stroke="#111" />
  </svg>
);

const CloseIcon = () => (
  <svg width="12" height="12" viewBox="0 0 12 12"><path d="M1 1l10 10M11 1L1 11" stroke="#111" /></svg>
);

const ExpandIcon = () => (
  <svg width="9" height="10" viewBox="0 0 9 10">
    <path d="M1 1l3.5 3L8 1M1 5l3.5 3L8 5" fill="none" stroke="#111" strokeWidth="1.4" />
  </svg>
);

const ScrollTriangle = ({ dir, color = '#48648c' }: { dir: 'up' | 'down' | 'left' | 'right'; color?: string }) => {
  const points = { up: '0,6 5,1 10,6', down: '0,1 10,1 5,6', left: '6,0 6,10 1,5', right: '1,0 1,10 6,5' }[dir];
  const size = dir === 'up' || dir === 'down' ? { width: 10, height: 7 } : { width: 7, height: 10 };
  return (
    <svg {...size} viewBox={`0 0 ${size.width} ${size.height}`}><polygon points={points} fill={color} /></svg>
  );
};

const NavIcon = ({ flip, bar }: { flip?: boolean; bar?: boolean }) => (
  <svg width="7" height="9" viewBox="0 0 7 9">
    <g transform={flip ? 'matrix(-1 0 0 1 7 0)' : undefined}>
      <polygon points="1,0 1,8 5,4" fill="#21406e" />
      {bar && <rect x="5.5" y="0" width="1" height="8" fill="#21406e" />}
    </g>
  </svg>
);

const NewSheetIcon = () => (
  <svg width="16" height="13" viewBox="0 0 16 13">
    <path d="M3 3h10v9H3z" fill="#fff" stroke="#7b8ea8" />
    <path d="M4 0l1 2 2-1-1 2 2 1-2 .6.6 2L5 5.8 3.6 7l.4-2-2-.5 2-1z" fill="#f0a92c" />
  </svg>
);

const ViewNormalIcon = () => (
  <svg width="13" height="12" viewBox="0 0 13 12">
    <rect x="0.5" y="0.5" width="12" height="11" fill="#fff" stroke="#555" />
    <path d="M4.5 0v12M8.5 0v12M0 4h13M0 8h13" stroke="#555" />
  </svg>
);

const ViewLayoutIcon = () => (
  <svg width="13" height="13" viewBox="0 0 13 13">
    <rect x="0.5" y="0.5" width="12" height="12" fill="#b9c3cf" stroke="#555" />
    <rect x="3.5" y="2.5" width="6" height="8" fill="#eef1f5" stroke="#777" />
  </svg>
);

const ViewBreakIcon = () => (
  <svg width="13" height="13" viewBox="0 0 13 13">
    <rect x="0.5" y="0.5" width="12" height="12" fill="#eef1f5" stroke="#555" />
    <path d="M6.5 0v9M0 9.5h13" stroke="#555" />
    <rect x="7" y="1" width="5" height="8" fill="#b9c3cf" />
  </svg>
);

const WindowsLogo = () => (
  <svg width="16" height="16" viewBox="0 0 16 16">
    <path d="M0 2.3L6.6 1.4v6.2H0zM7.4 1.3L16 0v7.6H7.4zM0 8.4h6.6v6.2L0 13.7zM7.4 8.4H16V16l-8.6-1.3z" fill="#fff" />
  </svg>
);

const SearchIcon = () => (
  <svg width="17" height="17" viewBox="0 0 17 17">
    <circle cx="10.5" cy="6.5" r="5" fill="none" stroke="#222" strokeWidth="1.2" />
    <path d="M7 10.5L1 16" stroke="#222" strokeWidth="1.3" />
  </svg>
);

const TaskViewIcon = () => (
  <svg width="16" height="17" viewBox="0 0 16 17">
    <rect x="0.5" y="3.5" width="10" height="9" fill="none" stroke="#fff" />
    <path d="M0 0.5h11M0 16h11M14 1v3M14 7v3M14 13v3" stroke="#fff" strokeWidth="1.2" />
  </svg>
);

const EdgeIcon = () => (
  <svg width="25" height="25" viewBox="0 0 25 25">
    <defs>
      <linearGradient id="edgeBlue" x1="0" y1="0" x2="1" y2="1">
        <stop offset="0" stopColor="#0c8fd6" />
        <stop offset="1" stopColor="#0b4fa8" />
      </linearGradient>
      <linearGradient id="edgeGreen" x1="0" y1="0" x2="1" y2="1">
        <stop offset="0" stopColor="#3bd0b0" />
        <stop offset="1" stopColor="#63c94c" />
      </linearGradient>
    </defs>
    <circle cx="12.5" cy="12.5" r="12" fill="url(#edgeBlue)" />
    <path d="M1 10C3 3 9 .5 13 .5c6 0 11 5 11 11 0 3-2 5-5 5-3 0-5-1-5-3 0-1 1-1 1-3 0-3-3-5-6-5-4 0-7 2-8 4.5z" fill="url(#edgeGreen)" />
    <path d="M6 15c0 5 5 9 10 8-3-1-5-4-5-7 0-2 1-3 1-3-3 0-6 0-6 2z" fill="#9fdcf5" />
  </svg>
);

const FolderIcon = () => (
  <svg width="24" height="22" viewBox="0 0 24 22">
    <path d="M0 2h9l2 2h12v4H0z" fill="#e6a92b" />
    <rect x="0" y="6" width="24" height="15" fill="#f8cf5b" />
    <rect x="0" y="17" width="24" height="4" fill="#3f9fe0" />
    <path d="M8 21v-5h8v5h-2v-3h-4v3z" fill="#2f7fc4" />
  </svg>
);

const StoreIcon = () => (
  <svg width="23" height="25" viewBox="0 0 23 25">
    <path d="M7 6V3c0-3 9-3 9 0v3" fill="none" stroke="#2aa6d9" strokeWidth="1.6" />
    <rect x="1" y="6" width="21" height="18" rx="2" fill="#f6f6f6" />
    <rect x="7" y="10" width="4" height="4" fill="#f25022" />
    <rect x="12" y="10" width="4" height="4" fill="#7fba00" />
    <rect x="7" y="15" width="4" height="4" fill="#00a4ef" />
    <rect x="12" y="15" width="4" height="4" fill="#ffb900" />
  </svg>
);

const MailIcon = () => (
  <svg width="24" height="21" viewBox="0 0 24 21">
    <path d="M0 8l12-8 12 8v13H0z" fill="#0f8fdc" />
    <path d="M5 5h14v5l-7 4.5-7-4.5z" fill="#e6f5fd" />
    <path d="M0 8l12 8 12-8v13H0z" fill="#33b5f2" />
  </svg>
);

const ChromeIcon = () => (
  <svg width="24" height="24" viewBox="0 0 24 24">
    <circle cx="12" cy="12" r="12" fill="#e8453c" />
    <path d="M12 12L1.6 6A12 12 0 0 0 12 24l5-9z" fill="#34a853" />
    <path d="M12 12l5.2 3L12 24A12 12 0 0 0 22.4 6H12z" fill="#fbbc05" />
    <circle cx="12" cy="12" r="5.5" fill="#fff" />
    <circle cx="12" cy="12" r="4.3" fill="#4285f4" />
  </svg>
);

const ExcelIcon = () => (
  <svg width="24" height="24" viewBox="0 0 24 24">
    <path d="M4 1h14l5 4v18H4z" fill="#e6f1de" stroke="#7aa86c" />
    <path d="M10 6h11M10 10h11M10 14h11M10 18h11M15 5v15" stroke="#8cb87f" />
    <rect x="1" y="6" width="13" height="13" fill="#2e8b3e" stroke="#1d6a2b" />
    <text x="7.5" y="16.5" textAnchor="middle" fontFamily="Liberation Serif" fontWeight="700" fontSize="12" fill="#fff">X</text>
  </svg>
);

const BatteryIcon = () => (
  <svg width="16" height="10" viewBox="0 0 16 10">
    <rect x="0.5" y="0.5" width="13" height="9" fill="none" stroke="#fff" />
    <rect x="2" y="2" width="6" height="6" fill="#fff" />
    <rect x="14" y="3" width="2" height="4" fill="#fff" />
  </svg>
);

const WifiIcon = () => (
  <svg width="14" height="14" viewBox="0 0 14 14">
    <path d="M1 13C1 7 7 1 13 1M4 13c0-4 5-9 9-9M7 13c0-2.5 3-6 6-6" fill="none" stroke="#ddd" />
    <circle cx="11.5" cy="12" r="1.5" fill="#fff" />
  </svg>
);

const VolumeIcon = () => (
  <svg width="16" height="14" viewBox="0 0 16 14">
    <path d="M1 5h2l4-4v12l-4-4H1z" fill="none" stroke="#fff" />
    <path d="M9 5c1 1 1 3 0 4M11 3c2 2 2 6 0 8M13 1c3 3 3 9 0 12" fill="none" stroke="#fff" />
  </svg>
);

const CaretUpIcon = () => (
  <svg width="12" height="7" viewBox="0 0 12 7"><path d="M1 6l5-5 5 5" fill="none" stroke="#fff" strokeWidth="1.2" /></svg>
);

const NotifyIcon = () => (
  <svg width="16" height="16" viewBox="0 0 16 16">
    <path d="M0.5 0.5h15v11H10l-2 3-2-3H0.5z" fill="none" stroke="#fff" />
  </svg>
);

/* ---------- data ---------- */

const COLUMNS = ['A', 'B', 'C', 'D', 'E', 'F', 'G', 'H', 'I', 'J', 'K', 'L'];
const ROWS = Array.from({ length: 24 }, (_, i) => i + 3);

const STAGES = [
  { name: 'Qualification', count: 158, total: 268810000, weighted: 26881000 },
  { name: 'Needs Analysis', count: 132, total: 215382000, weighted: 53845500 },
  { name: 'Proposal Sent', count: 149, total: 229307000, weighted: 114653500 },
  { name: 'Closed Won', count: 117, total: 177883000, weighted: 177883000 },
  { name: 'Closed Lost', count: 118, total: 193517000, weighted: 0 },
];

const KPIS = [
  { label: 'TOTAL ACCOUNTS', value: '1000' },
  { label: 'ACTIVE CUSTOMERS', value: '488' },
  { label: 'PIPELINE VALUE', value: '₹1,287,028,000' },
  { label: 'WEIGHTED FORCAST', value: '₹524,859,750' },
];

const Y_LABELS = ['30000000', '25000000', '20000000', '15000000', '10000000', '50000000', '0'];

// bar heights in px as drawn in the 128px plot
const BARS = [
  { x: 170, red: 115, green: 11 },
  { x: 280, red: 92, green: 23 },
  { x: 390, red: 98, green: 49 },
  { x: 500, red: 76, green: 76 },
  { x: 611, red: 83, green: 0 },
];

const blanks = (from: number, to: number, row: number) =>
  COLUMNS.slice(from, to).map((c) => <Cell key={`${c}${row}`} />);

const renderCells = (row: number) => {
  if (row === 8) {
    return (
      <>
        <Cell $edge="#000" />
        {KPIS.map((k) => <KpiLabel key={k.label}>{k.label}</KpiLabel>)}
        {blanks(9, 12, row)}
      </>
    );
  }
  if (row === 9) {
    return (
      <>
        <Cell $edge="#000" />
        {KPIS.map((k) => <KpiValue key={k.label} $wide={k.value.length > 5}>{k.value}</KpiValue>)}
        {blanks(9, 12, row)}
      </>
    );
  }
  if (row === 13) {
    return (
      <>
        <Cell />
        <BandTitle>Sales Pipelie Breakdown by Stage</BandTitle>
        {blanks(5, 12, row)}
      </>
    );
  }
  if (row === 14) {
    return (
      <>
        <Cell />
        {['Opportunity stage', 'Deal Count', 'Total Value', 'Weighted Value'].map((h) => <BandHead key={h}>{h}</BandHead>)}
        {blanks(5, 12, row)}
      </>
    );
  }
  if (row >= 15 && row <= 19) {
    const s = STAGES[row - 15];
    const under = row === 19 ? '#000' : undefined;
    return (
      <>
        <Cell />
        <StageCell $under={under}>{s.name}</StageCell>
        <Cell $under={under}>{s.count}</Cell>
        <Cell $under={under}>{s.total}</Cell>
        <Cell $under={under}>{s.weighted}</Cell>
        {blanks(5, 12, row)}
      </>
    );
  }
  if (row === 20) {
    return (
      <>
        <Cell />
        <TotalName>Total Pieline</TotalName>
        {['674', '1084899000', '373263000'].map((t) => <TotalCell key={t}>{t}</TotalCell>)}
        {blanks(5, 12, row)}
      </>
    );
  }
  if (row === 22) {
    return (
      <>
        {blanks(0, 3, row)}
        <ActiveCell />
        {blanks(4, 12, row)}
      </>
    );
  }
  return blanks(0, 12, row);
};

const Chart = () => (
  <ChartFrame>
    <ChartTitle><ChartTitleText>TOTAL VALUE VS WEIGHTED VALUE</ChartTitleText></ChartTitle>
    <ChartPlot width="693" height="137" viewBox="0 0 693 137">
      <text
        transform="translate(30 72) rotate(-90)"
        textAnchor="middle"
        fontFamily="Liberation Sans"
        fontWeight="700"
        fontSize="10.5"
        letterSpacing="0.3"
        fill="#111"
      >
        Axis Title
      </text>
      {Y_LABELS.map((label, i) => (
        <g key={label}>
          <line x1="126" x2="679" y1={8.5 + Math.round(i * 21.33)} y2={8.5 + Math.round(i * 21.33)} stroke="#868686" />
          <text
            x="115"
            y={13 + i * 21.33}
            textAnchor="end"
            fontFamily="Lato"
            fontSize="12.5"
            letterSpacing="-0.35"
            fill="#111"
          >
            {label}
          </text>
        </g>
      ))}
      <line x1="126.5" x2="126.5" y1="8" y2="137" stroke="#868686" />
      {BARS.map((b) => (
        <g key={b.x}>
          <rect x={b.x} y={136 - b.red} width="25" height={b.red} fill="#c0504d" />
          {b.green > 0 && <rect x={b.x + 25} y={136 - b.green} width="25" height={b.green} fill="#9bbb59" />}
        </g>
      ))}
    </ChartPlot>
    <DataTable>
      <TableBlank />
      {STAGES.map((s, i) => (i === 0
        ? <FirstDataCell key={s.name}>{s.name}</FirstDataCell>
        : <TableCell key={s.name}>{s.name}</TableCell>))}
      <LegendCell><LegendKey $color="#4f81bd" />Deal Count</LegendCell>
      {STAGES.map((s) => <TableCell key={s.name}>{s.count}</TableCell>)}
      <LegendCell><LegendKey $color="#c0504d" />Total Value</LegendCell>
      {STAGES.map((s) => <TableCell key={s.name}>{s.total}</TableCell>)}
      <LegendCell><LegendKey $color="#9bbb59" />Weighted Value</LegendCell>
      {STAGES.map((s) => <TableCell key={s.name}>{s.weighted}</TableCell>)}
    </DataTable>
  </ChartFrame>
);

const LargeAction = ({ width, icon, lines, arrowInline }: {
  width: number;
  icon: React.ReactNode;
  lines: string[];
  arrowInline?: boolean;
}) => (
  <LargeButton $width={width}>
    <LargeIcon>{icon}</LargeIcon>
    <LargeLabel>
      {lines.map((line, i) => (
        <LabelLine key={line}>
          {line}
          {arrowInline && i === lines.length - 1 && <Caret />}
        </LabelLine>
      ))}
      {!arrowInline && <LabelLine><Caret /></LabelLine>}
    </LargeLabel>
  </LargeButton>
);

const RibbonGroup = ({ width, label, launcher, children }: {
  width: number;
  label: string;
  launcher?: boolean;
  children: React.ReactNode;
}) => (
  <GroupBox $width={width}>
    <GroupBody>{children}</GroupBody>
    <GroupLabel $launcher={launcher}>
      {label}
      {launcher && <Launcher />}
    </GroupLabel>
  </GroupBox>
);

const App = () => (
  <Page>
    <GlobalStyle />
    <Orb><OrbIcon /></Orb>
    <QuickAccess>
      <SaveIcon />
      <QatPair><UndoIcon color="#3f73c4" /><Caret /></QatPair>
      <QatPair><RedoIcon color="#9fb2c8" /><Caret /></QatPair>
    </QuickAccess>
    <QatMenu><QatDropIcon /></QatMenu>

    <TitleBar>CRM Customer Database - Microsoft Excel</TitleBar>
    <WindowControls>
      <MinimizeIcon />
      <RestoreIcon />
      <CloseIcon />
    </WindowControls>

    <TabRow>
      <RibbonTab $active>Home</RibbonTab>
      {['Insert', 'Page Layout', 'Formulas', 'Data', 'Review', 'View'].map((t) => <RibbonTab key={t}>{t}</RibbonTab>)}
      <HelpControls>
        <HelpButton><HelpIcon /></HelpButton>
        <SmallWindowIcons />
      </HelpControls>
    </TabRow>

    <Ribbon>
      <RibbonGroup width={150} label="Clipboard" launcher>
        <LargeAction width={46} icon={<PasteIcon />} lines={['Paste']} />
        <SmallStack $left={2} $width={100}>
          <SmallButton><ScissorsIcon />Cut</SmallButton>
          <SmallButton><CopyIcon />Copy</SmallButton>
          <SmallButton><PainterIcon />Format Painter</SmallButton>
        </SmallStack>
      </RibbonGroup>

      <RibbonGroup width={195} label="Font" launcher>
        <ControlRows $left={3}>
          <ControlRow>
            <FontCombos>
              <ComboBox $width={97}>Calibri<Caret /></ComboBox>
              <ComboBox $width={42}>11<Caret /></ComboBox>
            </FontCombos>
            <ButtonSet>
              <SetItem $width={22} $size={16}>A<TinyArrow $up /></SetItem>
              <SetItem $width={21} $size={12}>A<TinyArrow /></SetItem>
            </ButtonSet>
          </ControlRow>
          <ControlRow>
            <ButtonSet>
              <SetItem $width={23}>B</SetItem>
              <SetItem $width={23}><i>I</i></SetItem>
              <SetItem $width={32}><u>U</u><Caret /></SetItem>
            </ButtonSet>
            <ButtonSet>
              <SetItem $width={33}><BorderIcon /><Caret /></SetItem>
            </ButtonSet>
            <ButtonSet>
              <SetItem $width={33}><FillIcon /><Caret /></SetItem>
              <SetItem $width={31}><FontColorIcon /><Caret /></SetItem>
            </ButtonSet>
          </ControlRow>
        </ControlRows>
      </RibbonGroup>

      <RibbonGroup width={250} label="Alignment" launcher>
        <ControlRows $left={4}>
          <ControlRow>
            <ButtonSet>
              <SetItem $width={22}><LineBox top={1} lines={[[1, 15], [3, 11], [1, 15]]} /></SetItem>
              <SetItem $width={22}><LineBox top={5} lines={[[1, 15], [3, 11], [1, 15]]} /></SetItem>
              <SetItem $width={22} $on><LineBox top={9} lines={[[1, 15], [3, 11], [1, 15]]} /></SetItem>
            </ButtonSet>
            <ButtonSet>
              <SetItem $width={30}><OrientationIcon /><Caret /></SetItem>
            </ButtonSet>
          </ControlRow>
          <ControlRow>
            <ButtonSet>
              <SetItem $width={22}><LineBox top={2} lines={[[1, 15], [1, 9], [1, 15], [1, 9], [1, 15], [1, 9]]} /></SetItem>
              <SetItem $width={22}><LineBox top={2} lines={[[1, 15], [4, 9], [1, 15], [4, 9], [1, 15], [4, 9]]} /></SetItem>
              <SetItem $width={22}><LineBox top={2} lines={[[1, 15], [7, 9], [1, 15], [7, 9], [1, 15], [7, 9]]} /></SetItem>
            </ButtonSet>
            <ButtonSet>
              <SetItem $width={22}><IndentIcon /></SetItem>
              <SetItem $width={22}><IndentIcon flip /></SetItem>
            </ButtonSet>
          </ControlRow>
        </ControlRows>
        <Separator />
        <SmallStack $left={6} $width={112}>
          <WrapRow><WrapIcon />Wrap Text</WrapRow>
          <MergeRow><MergeIcon />Merge &amp; Center<Caret /></MergeRow>
        </SmallStack>
      </RibbonGroup>

      <RibbonGroup width={135} label="Number" launcher>
        <ControlRows $left={3}>
          <ControlRow>
            <ComboBox $width={127}>General<Caret /></ComboBox>
          </ControlRow>
          <ControlRow>
            <ButtonSet>
              <SetItem $width={33} $size={13}>$<Caret /></SetItem>
              <SetItem $width={23} $size={13}>%</SetItem>
              <SetItem $width={22} $size={13}>,</SetItem>
            </ButtonSet>
            <ButtonSet>
              <SetItem $width={22}><DecIcon up /></SetItem>
              <SetItem $width={21}><DecIcon up={false} /></SetItem>
            </ButtonSet>
          </ControlRow>
        </ControlRows>
      </RibbonGroup>

      <RibbonGroup width={174} label="Styles">
        <LargeAction width={74} icon={<ConditionalIcon />} lines={['Conditional', 'Formatting']} arrowInline />
        <LargeAction width={52} icon={<TableBrushIcon />} lines={['Format', 'as Table']} arrowInline />
        <LargeAction width={46} icon={<CellStyleIcon />} lines={['Cell', 'Styles']} arrowInline />
      </RibbonGroup>

      <RibbonGroup width={133} label="Cells">
        <LargeAction width={48} icon={<InsertCellsIcon />} lines={['Insert']} />
        <LargeAction width={37} icon={<DeleteCellsIcon />} lines={['Delete']} />
        <LargeAction width={44} icon={<FormatCellsIcon />} lines={['Format']} />
      </RibbonGroup>

      <RibbonGroup width={175} label="Editing">
        <SmallStack $left={7} $width={84}>
          <SmallButton><SigmaIcon />AutoSum<Caret /></SmallButton>
          <SmallButton><FillDownIcon />Fill<Caret /></SmallButton>
          <SmallButton><EraserIcon />Clear<Caret /></SmallButton>
        </SmallStack>
        <LargeAction width={42} icon={<SortIcon />} lines={['Sort &', 'Filter']} arrowInline />
        <LargeAction width={42} icon={<BinocularsIcon />} lines={['Find &', 'Select']} arrowInline />
      </RibbonGroup>
    </Ribbon>

    <FormulaBar>
      <FormulaInner>
        <NameBox>D22<Caret $dark /></NameBox>
        <FxPill>
          <FxDot />
          <FxText>fx</FxText>
        </FxPill>
        <FormulaInput />
        <ExpandButton><ExpandIcon /></ExpandButton>
      </FormulaInner>
    </FormulaBar>

    <SheetArea>
      <SheetGrid>
        <CornerCell />
        {COLUMNS.map((c) => <ColumnHead key={c} $on={c === 'D'}>{c}</ColumnHead>)}
        {ROWS.map((row) => (
          <React.Fragment key={row}>
            <RowHead $on={row === 22}>{row}</RowHead>
            {renderCells(row)}
          </React.Fragment>
        ))}
        <TitleBanner>
          <BannerText>EXECUTIVE CRM &amp; SALES DASHBOARD</BannerText>
        </TitleBanner>
        <SubBanner>{'Performance  Overview  across 1000 accounts and pipline Opportuities'}</SubBanner>
        <Chart />
        <Watermark>
          <WatermarkTitle>Activate Windows</WatermarkTitle>
          <WatermarkHint>Go to Settings to activate Windows.</WatermarkHint>
        </Watermark>
      </SheetGrid>
      <VScroll>
        <ScrollSplit />
        <ScrollArrowBox><ScrollTriangle dir="up" /></ScrollArrowBox>
        <VThumb><VGrip /></VThumb>
        <DownArrow><ScrollTriangle dir="down" /></DownArrow>
      </VScroll>
    </SheetArea>

    <SheetTabs>
      <TabNav>
        <NavIcon flip bar />
        <NavIcon flip />
        <NavIcon />
        <NavIcon bar />
      </TabNav>
      <SheetTab $width={128} $first>Customer Master</SheetTab>
      <SheetTab $width={148}>Sales opportunities</SheetTab>
      <SheetTab $width={120}>Interaction Log</SheetTab>
      <SheetTab $width={162} $active>Excecutive Dashboard</SheetTab>
      <NewSheetTab><NewSheetIcon /></NewSheetTab>
      <HScrollRow>
        <HSplit />
        <HArrowBox><ScrollTriangle dir="left" /></HArrowBox>
        <HThumb><HGrip /></HThumb>
        <HTrackEnd><ScrollTriangle dir="right" /></HTrackEnd>
        <HSplit />
      </HScrollRow>
    </SheetTabs>

    <StatusBar>
      <ReadyCell>Ready</ReadyCell>
      <StatusGap />
      <StatusRight>
        <ViewButtons>
          <ViewButton $on><ViewNormalIcon /></ViewButton>
          <ViewButton><ViewLayoutIcon /></ViewButton>
          <ViewButton><ViewBreakIcon /></ViewButton>
        </ViewButtons>
        <ZoomText>100%</ZoomText>
        <ZoomCircle>−</ZoomCircle>
        <ZoomTrack><ZoomKnob /></ZoomTrack>
        <ZoomCircle>+</ZoomCircle>
      </StatusRight>
    </StatusBar>

    <Taskbar>
      <StartButton><WindowsLogo /></StartButton>
      <SearchBox><SearchIcon />Type here to search</SearchBox>
      <TaskIcons>
        <TaskIcon><TaskViewIcon /></TaskIcon>
        <TaskIcon><EdgeIcon /></TaskIcon>
        <TaskIcon $running><FolderIcon /></TaskIcon>
        <TaskIcon><StoreIcon /></TaskIcon>
        <TaskIcon><MailIcon /></TaskIcon>
        <TaskIcon $running><ChromeIcon /></TaskIcon>
        <TaskIcon $running $active><ExcelIcon /></TaskIcon>
      </TaskIcons>
      <Tray>
        <TrayIcons>
          <CaretUpIcon />
          <BatteryIcon />
          <WifiIcon />
          <VolumeIcon />
        </TrayIcons>
        <TrayText $width={36}>ENG<br />IN</TrayText>
        <TrayText $width={60}>11:28 AM<br />8/13/2026</TrayText>
        <Notify><NotifyIcon /></Notify>
      </Tray>
    </Taskbar>
  </Page>
);

export default App;
